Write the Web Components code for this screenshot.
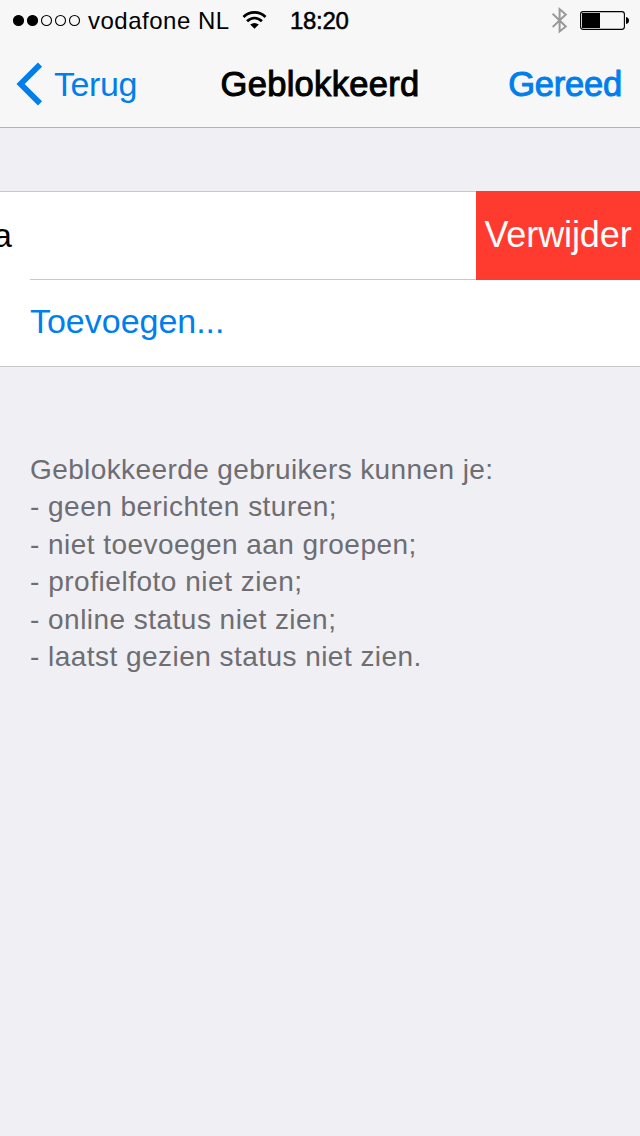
<!DOCTYPE html>
<html lang="nl">
<head>
<meta charset="utf-8">
<title>Geblokkeerd</title>
<style>
html,body{margin:0;height:100%;background:#efeff4}
body{font-family:"Liberation Sans",Arial,sans-serif;color:#000;overflow:hidden}
</style>
</head>
<body>
<app-screen></app-screen>
<script>
const define = (name, html) => {
  const t = document.createElement('template');
  t.innerHTML = html;
  customElements.define(name, class extends HTMLElement {
    constructor() {
      super();
      this.attachShadow({mode: 'open'}).append(t.content.cloneNode(true));
    }
  });
};

define('status-bar', `
<style>
:host{display:flex;height:40px;box-sizing:border-box;padding:0 10px 0 12px;align-items:flex-start;font-size:24px;line-height:42px;white-space:nowrap}
svg{display:block;flex:none}
.carrier{margin-left:7px;width:143px;letter-spacing:.5px}
.wifi{margin-left:11px}
.time{margin-left:23px;flex:1;-webkit-text-stroke:.5px #000;letter-spacing:-.3px}
</style>
<svg width="69" height="40" viewBox="0 0 69 40"><g stroke="#000" stroke-width="1.1" fill="none"><circle cx="6.5" cy="20.5" r="5" fill="#000"/><circle cx="20.5" cy="20.5" r="5" fill="#000"/><circle cx="34.5" cy="20.5" r="5"/><circle cx="48.5" cy="20.5" r="5"/><circle cx="62.5" cy="20.5" r="5"/></g></svg>
<span class="carrier">vodafone NL</span>
<svg class="wifi" width="25" height="40" viewBox="0 0 25 40"><g fill="none" stroke="#000" stroke-width="2.8"><path d="M1.5 17C7.7 10.9 17.3 10.9 23.5 17"/><path d="M5.1 21.3C9.6 17.1 15.4 17.1 19.9 21.3"/></g><path d="M8.2 24.6Q12.5 21.6 16.8 24.6L12.5 28.8Z"/></svg>
<span class="time">18:20</span>
<svg width="16" height="40" viewBox="0 0 16 40"><path d="M.6 13.6L13.8 26.5L7.6 31.5V9.1L13.8 14.5L.6 27" fill="none" stroke="#999" stroke-width="2"/></svg>
<svg style="margin-left:12px" width="50" height="40" viewBox="0 0 50 40"><rect x=".6" y="11.6" width="43.8" height="17.8" rx="2.6" fill="none" stroke="#000" stroke-width="1.1"/><path d="M2 13h18v15H2zM46 17q3 .5 3 3.5t-3 3.5z"/></svg>
`);

define('nav-bar', `
<style>
:host{display:grid;grid-template-columns:1fr auto 1fr;height:88px;box-sizing:border-box;border-bottom:1px solid #b2b2b2;padding:0 18px 0 16px;font-size:34px;line-height:89px;white-space:nowrap}
.back{display:flex;color:#007fec;letter-spacing:-.4px}
svg{display:block;margin-right:11px}
.title{font-size:34.5px;-webkit-text-stroke:1px #000;letter-spacing:.3px;padding-left:2px}
.done{font-size:34.5px;justify-self:end;color:#007fec;-webkit-text-stroke:1px #007fec;letter-spacing:-.2px}
</style>
<div class="back"><svg width="27" height="87" viewBox="0 0 27 87"><path d="M24 24.6L4.6 44L24 63.4" fill="none" stroke="#007fec" stroke-width="5.8"/></svg><slot name="back"></slot></div>
<div class="title"><slot></slot></div>
<div class="done"><slot name="done"></slot></div>
`);

define('list-group', `
<style>
:host{display:block;box-sizing:border-box;height:176px;background:#fff;border-top:1px solid #c8c7cc;border-bottom:1px solid #c8c7cc}
</style><slot></slot>
`);

define('swipe-row', `
<style>
:host{display:flex;height:88px;font-size:34px;justify-content:space-between}
.body{flex:1;display:grid;grid-template-rows:87px 1px}
.name{margin-left:-7px;line-height:86px}
.rule{margin-left:30px;background:#c8c7cc}
.action{width:164px;height:89px;margin-top:-1px;background:#ff3b30;color:#fff;text-align:center;font-size:36px;line-height:88px;letter-spacing:-.1px}
</style>
<div class="body"><div class="name"><slot></slot></div><div class="rule"></div></div>
<div class="action"><slot name="action"></slot></div>
`);

define('link-row', `
<style>
:host{display:block;height:86px;padding-left:30px;font-size:34px;line-height:83px;color:#007fec;letter-spacing:-.02px}
</style><slot></slot>
`);

define('info-note', `
<style>
:host{display:block;padding:84px 30px 0;font-size:28px;line-height:37.4px;color:#6d6d72;white-space:nowrap}
::slotted(div){letter-spacing:var(--track,.4px)}
</style><slot></slot>
`);

define('app-screen', `
<style>
:host{display:block;width:640px;height:1136px;background:#efeff4;overflow:hidden}
header{background:#f7f7f7}
main{padding-top:63px}
</style>
<header>
<status-bar></status-bar>
<nav-bar><span slot="back">Terug</span>Geblokkeerd<span slot="done">Gereed</span></nav-bar>
</header>
<main>
<list-group>
<swipe-row>a<span slot="action">Verwijder</span></swipe-row>
<link-row>Toevoegen...</link-row>
</list-group>
<info-note><div style="--track:.4px">Geblokkeerde gebruikers kunnen je:</div><div style="--track:.47px">- geen berichten sturen;</div><div style="--track:.45px">- niet toevoegen aan groepen;</div><div style="--track:.53px">- profielfoto niet zien;</div><div style="--track:.47px">- online status niet zien;</div><div style="--track:.46px">- laatst gezien status niet zien.</div></info-note>
</main>
`);
</script>
</body>
</html>
